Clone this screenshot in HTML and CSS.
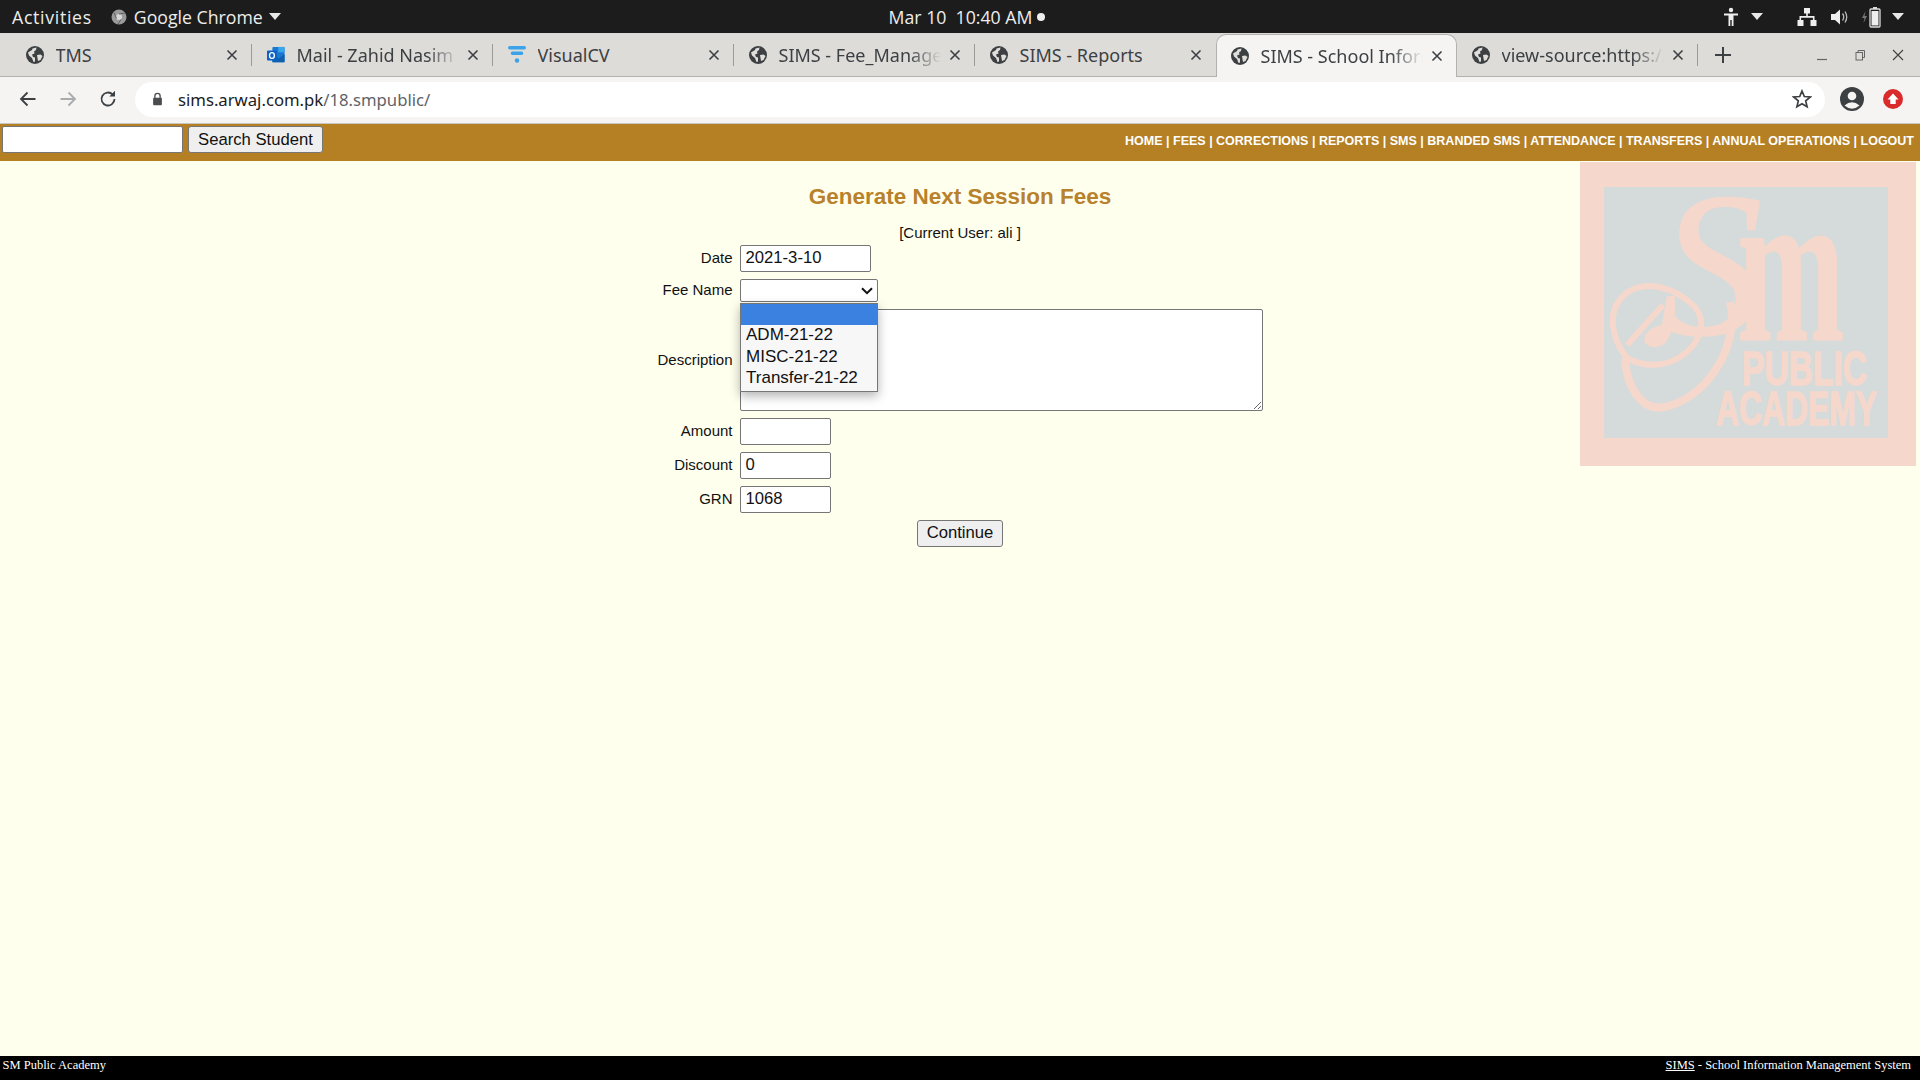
FILE: index.html
```html
<!DOCTYPE html>
<html lang="en">
<head>
<meta charset="utf-8">
<title>SIMS - School Information Management System</title>
<link rel="stylesheet" href="styles.css">
</head>
<body>
<svg class="defs" width="0" height="0" aria-hidden="true">
  <symbol id="globe" viewBox="0 0 18 18">
    <circle cx="9" cy="9" r="9" fill="#3c4043"/>
    <path d="M2 6.500 L6 4 L6.500 2.500 L10.500 1.500 L10 4 L8 5.500 L8.500 7.500 L6 8.500 L7 11 L9 11.500 L9 15.500 L7.500 16 L6 12 L3 9.500Z" fill="#e0dedb"/>
    <path d="M11 9 L14.500 8.500 L16.500 10 L14.500 14 L12 15 L11.500 12Z" fill="#e0dedb"/>
  </symbol>
  <symbol id="close" viewBox="0 0 12 12">
    <path d="M1.500 1.500 L10.500 10.500 M10.500 1.500 L1.500 10.500" stroke="#3c4043" stroke-width="1.600" fill="none"/>
  </symbol>
</svg>

<header class="desktop-bar">
  <div class="bar-left">
    <span class="activities">Activities</span>
    <span class="app">
      <svg class="app-icon" viewBox="0 0 16 16"><circle cx="8" cy="8" r="7.500" fill="#9a9a9a"/><circle cx="8" cy="8" r="3" fill="#d8d8d8"/><path d="M8 5 L14 4 M5.500 9.500 L3 3.500 M10 10.500 L7 15" stroke="#5f5f5f" stroke-width="1"/></svg>
      Google Chrome
      <i class="tri"></i>
    </span>
  </div>
  <div class="clock">Mar 10&nbsp; 10:40 AM<i class="dot"></i></div>
  <div class="bar-right">
    <svg class="tray a11y" viewBox="0 0 16 20"><circle cx="8" cy="3" r="2.200" fill="#eee"/><path d="M1 6.500 H15 V8.500 H10.500 V19 H8.700 V13 H7.300 V19 H5.500 V8.500 H1Z" fill="#eee"/></svg>
    <i class="tri a11y-tri"></i>
    <svg class="tray net" viewBox="0 0 20 20"><path d="M7 1 H13 V6.500 H10.800 V9 H17.500 V13 H19.500 V19 H13.500 V13 H15.900 V10.800 H4.100 V13 H6.500 V19 H.5 V13 H2.500 V9 H9.200 V6.500 H7Z" fill="#eee"/></svg>
    <svg class="tray vol" viewBox="0 0 20 20"><path d="M1 7 H5 L10 2.500 V17.500 L5 13 H1Z" fill="#eee"/><path d="M12.500 6.500 Q15 10 12.500 13.500 M15 4.500 Q18.500 10 15 15.500" stroke="#bbb" stroke-width="1.300" fill="none"/></svg>
    <svg class="tray bat" viewBox="0 0 22 22"><path d="M4.500 5 L1 12 H3.500 L2.500 17 L6 10 H3.500Z" fill="#777"/><rect x="9" y="3" width="10" height="18" rx="1" fill="none" stroke="#ddd" stroke-width="1.300"/><rect x="12" y="1" width="4" height="2" fill="#ddd"/><rect x="10.500" y="5" width="7" height="14.500" fill="#eee"/></svg>
    <i class="tri bat-tri"></i>
  </div>
</header>

<nav class="tabstrip">
  <div class="tab"><svg class="fav"><use href="#globe"/></svg><span class="title">TMS</span><svg class="x"><use href="#close"/></svg></div>
  <div class="tab"><svg class="fav" viewBox="0 0 20 20"><rect x="6" y="1" width="13.500" height="17" rx="1" fill="#1a78d1"/><rect x="12.500" y="1" width="7" height="6" fill="#38a5ee"/><path d="M6 9 L13 14 L19.500 9 V18 H6Z" fill="#0f5fb0"/><rect x="0" y="5" width="11" height="11" rx="1" fill="#0c62c4"/><ellipse cx="5.500" cy="10.500" rx="2.700" ry="3.200" fill="none" stroke="#fff" stroke-width="1.500"/></svg><span class="title fade">Mail - Zahid Nasim - Outlook</span><svg class="x"><use href="#close"/></svg></div>
  <div class="tab"><svg class="fav" viewBox="0 0 20 20"><path d="M0 2 Q0 0 2 0 H18 Q20 0 20 2 Q20 4 18 4 H2 Q0 4 0 2Z M3 8 Q3 6 5 6 H15 Q17 6 17 8 Q17 10 15 10 H5 Q3 10 3 8Z" fill="#3aa3ea"/><circle cx="10" cy="16" r="2.500" fill="#3aa3ea"/></svg><span class="title">VisualCV</span><svg class="x"><use href="#close"/></svg></div>
  <div class="tab"><svg class="fav"><use href="#globe"/></svg><span class="title fade">SIMS - Fee_Management</span><svg class="x"><use href="#close"/></svg></div>
  <div class="tab no-sep"><svg class="fav"><use href="#globe"/></svg><span class="title">SIMS - Reports</span><svg class="x"><use href="#close"/></svg></div>
  <div class="tab active"><svg class="fav"><use href="#globe"/></svg><span class="title fade">SIMS - School Information</span><svg class="x"><use href="#close"/></svg></div>
  <div class="tab"><svg class="fav"><use href="#globe"/></svg><span class="title fade">view-source:https://sims</span><svg class="x"><use href="#close"/></svg></div>
  <svg class="newtab" viewBox="0 0 16 16"><path d="M8 0 V16 M0 8 H16" stroke="#3c4043" stroke-width="2"/></svg>
  <div class="winctl">
    <svg viewBox="0 0 12 12"><path d="M1 10.500 H11" stroke="#666" stroke-width="1.200"/></svg>
    <svg viewBox="0 0 12 12"><rect x="2" y="3.500" width="6.500" height="7.500" fill="none" stroke="#666"/><path d="M4 3.500 V1.500 H10.500 V8.500 H8.500" fill="none" stroke="#666"/></svg>
    <svg viewBox="0 0 12 12"><path d="M1 1 L11 11 M11 1 L1 11" stroke="#444" stroke-width="1.200"/></svg>
  </div>
</nav>

<div class="toolbar">
  <svg class="tool" viewBox="0 0 18 18"><path d="M16.500 9 H2.500 M8.500 2.500 L2 9 L8.500 15.500" fill="none" stroke="#3c4043" stroke-width="1.800"/></svg>
  <svg class="tool" viewBox="0 0 18 18"><path d="M1.500 9 H15.500 M9.500 2.500 L16 9 L9.500 15.500" fill="none" stroke="#a9abad" stroke-width="1.800"/></svg>
  <svg class="tool" viewBox="0 0 18 18"><path d="M15.500 9 A6.500 6.500 0 1 1 13.600 4.400" fill="none" stroke="#3c4043" stroke-width="1.800"/><path d="M16 .8 V6.500 H10.300Z" fill="#3c4043"/></svg>
  <div class="omnibox">
    <svg class="lock" viewBox="0 0 12 16"><path d="M3 7 V4.500 A3 3 0 0 1 9 4.500 V7" fill="none" stroke="#4a4c4f" stroke-width="1.500"/><rect x="1" y="6.500" width="10" height="8.500" rx="1" fill="#4a4c4f"/></svg>
    <span class="url"><b>sims.arwaj.com.pk</b>/18.smpublic/</span>
    <svg class="star" viewBox="0 0 20 20"><path d="M10 2 L12.300 7.500 L18.300 8 L13.700 11.900 L15.100 17.800 L10 14.700 L4.900 17.800 L6.300 11.900 L1.700 8 L7.700 7.500Z" fill="none" stroke="#3c4043" stroke-width="1.700"/></svg>
  </div>
  <svg class="avatar" viewBox="0 0 24 24"><circle cx="12" cy="12" r="12" fill="#3c4043"/><circle cx="12" cy="9" r="4.300" fill="#f5f4f3"/><path d="M4.500 18.500 Q12 12 19.500 18.500 Q12 25 4.500 18.500Z" fill="#f5f4f3"/></svg>
  <svg class="update" viewBox="0 0 20 20"><circle cx="10" cy="10" r="10" fill="#d92b2b"/><path d="M10 4.500 L15.500 10.500 H12.700 V15 H7.300 V10.500 H4.500Z" fill="#fff"/></svg>
</div>

<div class="page">
  <div class="sitebar">
    <form class="search">
      <input class="search-input" type="text" aria-label="Search">
      <button class="btn search-btn" type="button">Search Student</button>
    </form>
    <div class="menu">HOME | FEES | CORRECTIONS | REPORTS | SMS | BRANDED SMS | ATTENDANCE | TRANSFERS | ANNUAL OPERATIONS | LOGOUT</div>
  </div>

  <main class="content">
    <svg class="watermark" viewBox="0 0 336 304">
      <rect width="336" height="304" fill="#f5d8cb"/>
      <rect x="24" y="25" width="284" height="251" fill="#d5dadb"/>
      <g fill="#f5d8cb" stroke="#f5d8cb" font-family="'Liberation Serif', serif">
        <text transform="translate(80 172)" font-size="205" font-style="italic" stroke-width="1.500">S</text>
        <text x="157" y="178" font-size="220" font-weight="700" textLength="108" lengthAdjust="spacingAndGlyphs">m</text>
      </g>
      <path d="M150 140 C160 180 130 235 85 245 C60 250 46 222 45 196" fill="none" stroke="#f5d8cb" stroke-width="8"/>
      <path d="M47 196 C30 175 28 150 42 135 C62 115 95 125 115 145 C130 165 115 190 90 200 C75 205 60 203 47 196 M47 183 L83 143" fill="none" stroke="#f5d8cb" stroke-width="6"/>
      <path d="M90 140 C94 165 90 184 74 184 C60 184 62 165 88 163Z" fill="#f5d8cb" stroke="#f5d8cb" stroke-width="2"/>
      <g fill="#f5d8cb" stroke="#f5d8cb" stroke-width="1.500" font-family="'Liberation Sans', sans-serif" font-weight="700">
        <text x="162" y="223" font-size="48" textLength="125" lengthAdjust="spacingAndGlyphs">PUBLIC</text>
        <text x="136" y="263" font-size="48" textLength="161" lengthAdjust="spacingAndGlyphs">ACADEMY</text>
      </g>
    </svg>

    <h1 class="heading">Generate Next Session Fees</h1>
    <p class="user">[Current User: ali ]</p>

    <form class="fee-form">
      <label class="lbl">Date</label>
      <div class="field"><input class="inp inp-date" type="text" value="2021-3-10"></div>

      <label class="lbl">Fee Name</label>
      <div class="field select-wrap">
        <select class="sel" aria-label="Fee Name"><option></option><option>ADM-21-22</option><option>MISC-21-22</option><option>Transfer-21-22</option></select>
        <svg class="chev" viewBox="0 0 12 8"><path d="M1 1.200 L6 6.200 L11 1.200" fill="none" stroke="#111" stroke-width="2"/></svg>
        <ul class="popup">
          <li class="opt opt-on"></li>
          <li class="opt">ADM-21-22</li>
          <li class="opt">MISC-21-22</li>
          <li class="opt">Transfer-21-22</li>
        </ul>
      </div>

      <label class="lbl">Description</label>
      <div class="field"><textarea class="area" aria-label="Description"></textarea></div>

      <label class="lbl">Amount</label>
      <div class="field"><input class="inp inp-num" type="text"></div>

      <label class="lbl">Discount</label>
      <div class="field"><input class="inp inp-num" type="text" value="0"></div>

      <label class="lbl">GRN</label>
      <div class="field"><input class="inp inp-num" type="text" value="1068"></div>

      <div class="actions"><button class="btn cont" type="button">Continue</button></div>
    </form>
  </main>

  <footer class="foot">
    <span>SM Public Academy</span>
    <span><u>SIMS</u> - School Information Management System</span>
  </footer>
</div>
</body>
</html>
```

FILE: styles.css
```css
* { box-sizing: border-box; }
html, body { margin: 0; height: 100%; }
body {
  display: flex;
  flex-direction: column;
  height: 1080px;
  overflow: hidden;
  font-family: "Noto Sans", sans-serif;
  background: #ffffee;
}
.defs { position: absolute; }

/* GNOME top bar */
.desktop-bar {
  height: 34px;
  flex: none;
  display: grid;
  grid-template-columns: 1fr auto 1fr;
  align-items: center;
  background: #1c1c1c;
  color: #eeeeec;
  font-family: "Open Sans", "Noto Sans", sans-serif;
  font-size: 17.700px;
  font-weight: 500;
  padding: 0 0 0 12px;
  border-bottom: 1px solid #dcdad6;
}
.bar-left { display: flex; align-items: center; gap: 19px; }
.activities { letter-spacing: .7px; }
.app { display: flex; align-items: center; gap: 7px; }
.app-icon { width: 16px; height: 16px; }
.tri {
  display: inline-block;
  width: 0; height: 0;
  border-left: 6px solid transparent;
  border-right: 6px solid transparent;
  border-top: 7px solid #e8e8e8;
  margin-left: -1px;
}
.clock { display: flex; align-items: center; gap: 5px; margin-left: 2px; }
.dot { width: 8px; height: 8px; border-radius: 50%; background: #eee; }
.bar-right { display: flex; align-items: center; justify-content: flex-end; padding-right: 16px; }
.tray { display: block; }
.a11y { width: 16px; height: 20px; }
.a11y-tri { margin-left: 12px; }
.net { width: 20px; height: 20px; margin-left: 34px; }
.vol { width: 20px; height: 20px; margin-left: 13px; }
.bat { width: 22px; height: 22px; margin-left: 11px; }
.bat-tri { margin-left: 9px; }

/* Chrome tab strip */
.tabstrip {
  height: 43px;
  flex: none;
  display: flex;
  align-items: stretch;
  background: #dedcd9;
  padding-left: 10.500px;
  border-bottom: 1px solid #b4b2af;
  position: relative;
}
.tab {
  width: 241px;
  flex: none;
  display: flex;
  align-items: center;
  padding: 0 14px 0 15px;
  color: #3c4043;
  font-size: 18px;
  position: relative;
}
.tab::after {
  content: "";
  position: absolute;
  right: 0; top: 10px; bottom: 10px;
  width: 1px;
  background: #9b9a97;
}
.tab.no-sep::after, .tab.active::after { display: none; }
.tab.active {
  background: #f5f4f3;
  border: 1px solid #b4b2af;
  border-bottom: 0;
  border-radius: 10px 10px 0 0;
  height: 43px;
  padding: 0 13px 1px 14px;
  z-index: 1;
}
.fav { width: 18px; height: 18px; flex: none; }
.title {
  flex: 1;
  margin: 0 8px 0 12px;
  white-space: nowrap;
  overflow: hidden;
}
.fade {
  -webkit-mask-image: linear-gradient(to right, #000 80%, transparent 100%);
  mask-image: linear-gradient(to right, #000 80%, transparent 100%);
}
.x { width: 12px; height: 12px; flex: none; }
.newtab { width: 16px; height: 16px; margin: 13px 0 0 17px; flex: none; }
.winctl { flex: 1; display: flex; justify-content: flex-end; align-items: center; gap: 26px; padding-right: 16px; }
.winctl svg { width: 12px; height: 12px; }

/* toolbar */
.toolbar {
  height: 47px;
  flex: none;
  display: flex;
  align-items: center;
  background: #f5f4f3;
  padding: 4px 0 6px 18.500px;
  border-bottom: 1px solid #c8c6c3;
}
.tool { width: 18px; height: 18px; flex: none; margin-right: 22px; }
.omnibox {
  flex: none;
  margin-left: -3.500px;
  width: 1690px;
  height: 35px;
  border-radius: 18px;
  background: #fff;
  display: flex;
  align-items: center;
  padding: 0 13px 0 16.500px;
}
.lock { width: 11px; height: 14px; flex: none; }
.url { flex: 1; margin-left: 15.500px; font-size: 16.700px; color: #5f6368; }
.url b { font-weight: 400; color: #202124; }
.star { width: 20px; height: 20px; }
.avatar { width: 24px; height: 24px; margin-left: 15px; flex: none; }
.update { width: 20px; height: 20px; margin-left: 19px; flex: none; }

/* page */
.page {
  flex: 1;
  min-height: 0;
  display: flex;
  flex-direction: column;
  font-family: "Liberation Sans", Arial, sans-serif;
  color: #111;
}
.sitebar {
  height: 37px;
  flex: none;
  display: flex;
  align-items: flex-start;
  justify-content: space-between;
  background: #b57f24;
  padding: 2px 6px 0 2px;
}
.search { display: flex; gap: 5px; }
.search-input {
  width: 181px;
  height: 27px;
  border: 1px solid #767676;
  border-radius: 2px;
  background: #fff;
  padding: 0 4px;
}
.btn {
  font-family: inherit;
  font-size: 16.670px;
  color: #111;
  background: #efefef;
  border: 1px solid #767676;
  border-radius: 3px;
  padding: 0 0 1px;
}
.search-btn { width: 135px; height: 27px; padding: 1px 0 0; }
.menu {
  color: #fff;
  font-weight: 700;
  font-size: 12.500px;
  line-height: 18px;
  padding-top: 6px;
  white-space: nowrap;
}
.content {
  flex: 1;
  min-height: 0;
  position: relative;
  display: flex;
  flex-direction: column;
  align-items: center;
}
.watermark {
  position: absolute;
  left: 1580px;
  top: 1px;
  width: 336px;
  height: 304px;
}
.heading {
  margin: 22px 0 0;
  font-size: 22.500px;
  line-height: 28px;
  font-weight: 700;
  color: #b8812b;
}
.user {
  margin: 13px 0 0;
  font-size: 15px;
  line-height: 18px;
  height: 21px;
}
.fee-form {
  display: grid;
  grid-template-columns: auto auto;
  justify-content: center;
  align-items: center;
  column-gap: 7px;
  row-gap: 7px;
}
.lbl { font-size: 15px; text-align: right; padding-bottom: 2px; }
.field { display: flex; }
.inp {
  height: 27px;
  border: 1px solid #767676;
  border-radius: 2px;
  background: #fff;
  padding: 0 4px 2px 5px;
  font-family: inherit;
  font-size: 16.670px;
  color: #111;
}
.inp-date { width: 131px; }
.inp-num { width: 91px; }
.select-wrap { position: relative; }
.sel {
  width: 138px;
  height: 23px;
  appearance: none;
  -webkit-appearance: none;
  font-family: inherit;
  font-size: 16.670px;
  background: #fff;
  border: 1px solid #767676;
  border-radius: 2px;
}
.chev {
  position: absolute;
  left: 121px;
  top: 8px;
  width: 12px;
  height: 8px;
  pointer-events: none;
}
.popup {
  position: absolute;
  left: 0;
  top: 24px;
  width: 138px;
  margin: 0;
  padding: 0 0 1px;
  list-style: none;
  background: #f7f7f7;
  border: 1px solid #767676;
  box-shadow: 0 4px 10px rgba(0,0,0,.3);
  z-index: 2;
  font-size: 17px;
  color: #111;
}
.opt { height: 21.500px; line-height: 19.500px; padding-left: 5.500px; }
.opt-on { background: #3b82e0; height: 21px; }
.area {
  display: block;
  width: 523px;
  height: 102px;
  border: 1px solid #767676;
  border-radius: 2px;
  background: #fff;
  margin: 0;
}
.actions { grid-column: 1 / 3; display: flex; justify-content: center; }
.cont { width: 86px; height: 27px; }
.foot {
  height: 24px;
  flex: none;
  display: flex;
  justify-content: space-between;
  background: #000;
  color: #fff;
  font-family: "Liberation Serif", serif;
  font-size: 12.500px;
  line-height: 18px;
  padding: 0 9px 0 2.500px;
}
```
